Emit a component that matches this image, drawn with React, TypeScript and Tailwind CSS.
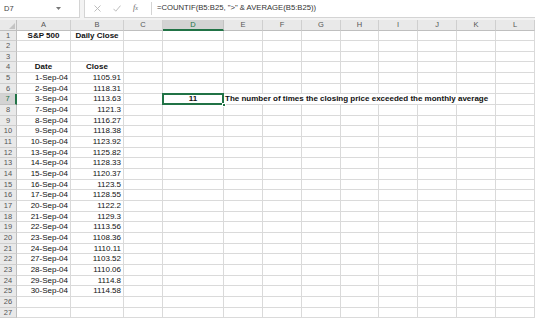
import React from 'react'

const COLS = ['A', 'B', 'C', 'D', 'E', 'F', 'G', 'H', 'I', 'J', 'K', 'L']

const DATA: [string, string][] = [
  ['1-Sep-04', '1105.91'],
  ['2-Sep-04', '1118.31'],
  ['3-Sep-04', '1113.63'],
  ['7-Sep-04', '1121.3'],
  ['8-Sep-04', '1116.27'],
  ['9-Sep-04', '1118.38'],
  ['10-Sep-04', '1123.92'],
  ['13-Sep-04', '1125.82'],
  ['14-Sep-04', '1128.33'],
  ['15-Sep-04', '1120.37'],
  ['16-Sep-04', '1123.5'],
  ['17-Sep-04', '1128.55'],
  ['20-Sep-04', '1122.2'],
  ['21-Sep-04', '1129.3'],
  ['22-Sep-04', '1113.56'],
  ['23-Sep-04', '1108.36'],
  ['24-Sep-04', '1110.11'],
  ['27-Sep-04', '1103.52'],
  ['28-Sep-04', '1110.06'],
  ['29-Sep-04', '1114.8'],
  ['30-Sep-04', '1114.58'],
]

const cell = 'border-r border-b border-[#dadada] text-[8px] leading-[10px] whitespace-nowrap overflow-visible text-[#111] px-[2px]'

function Row({ n }: { n: number }) {
  const selected = n === 7
  const hdr = (
    <div
      className={
        'border-b text-[7.5px] leading-[10px] text-center ' +
        (selected
          ? 'bg-[#d3d3d3] text-[#217346] border-[#c2c2c2] border-r-2 border-r-[#217346]'
          : 'bg-[#e9e9e9] text-[#555] border-[#cfcfcf] border-r border-r-[#bfbfbf]')
      }
    >
      {n}
    </div>
  )
  let a = ''
  let b = ''
  let aBold = false
  if (n === 1) { a = 'S&P 500'; b = 'Daily Close'; aBold = true }
  if (n === 4) { a = 'Date'; b = 'Close'; aBold = true }
  if (n >= 5 && n <= 25) { a = DATA[n - 5][0]; b = DATA[n - 5][1] }
  const align = aBold ? 'text-center font-bold' : 'text-right'

  return (
    <>
      {hdr}
      <div className={cell + ' ' + align}>{a}</div>
      <div className={cell + ' ' + align}>{b}</div>
      <div className={cell}></div>
      {selected ? (
        <div className={cell + ' relative text-center font-bold'}>
          11
          <div className="absolute -left-[1px] -top-[1px] -right-[1px] -bottom-[1px] border-2 border-[#217346]" />
          <div className="absolute -right-[3px] -bottom-[3px] w-[4px] h-[4px] bg-[#217346] border border-white" />
        </div>
      ) : (
        <div className={cell}></div>
      )}
      {selected ? (
        <>
          <div className={cell + ' col-span-7 font-bold pl-[1px]'}>
            The number of times the closing price exceeded the monthly average
          </div>
          <div className={cell}></div>
        </>
      ) : (
        COLS.slice(4).map((c) => <div key={c} className={cell}></div>)
      )}
    </>
  )
}

export default function App() {
  return (
    <div
      className="w-[535px] h-[319px] overflow-hidden bg-white"
      style={{ fontFamily: '"Liberation Sans", Arial, sans-serif' }}
    >
      {/* formula bar */}
      <div className="h-[20px] bg-[#f3f3f3] pb-[2.5px] flex">
        <div className="w-[80px] h-full bg-white border-r border-b border-[#d4d4d4] flex items-center justify-between pl-[4px] pr-[18px]">
          <span className="text-[7.5px] text-[#444]">D7</span>
          <svg width="5" height="3" viewBox="0 0 5 3"><path d="M0 0 L5 0 L2.5 3 Z" fill="#777" /></svg>
        </div>
        <div className="w-[4px]" />
        <div className="flex-1 h-full bg-white border-b border-l border-[#d4d4d4] flex items-center">
          <div className="w-[66px] flex items-center pl-[9px] gap-[12px]">
            <svg width="7" height="7" viewBox="0 0 7 7"><path d="M0.5 0.5 L6.5 6.5 M6.5 0.5 L0.5 6.5" stroke="#b5b5b5" strokeWidth="0.9" /></svg>
            <svg width="8" height="7" viewBox="0 0 8 7"><path d="M0.5 3.8 L2.8 6.2 L7.5 0.6" stroke="#b5b5b5" strokeWidth="0.9" fill="none" /></svg>
            <span className="text-[8px] italic text-[#666]" style={{ fontFamily: '"Liberation Serif", serif' }}>f<span className="text-[6px]">x</span></span>
          </div>
          <div className="w-[1px] h-[13px] bg-[#d4d4d4]" />
          <div className="pl-[5px] text-[7.7px] text-[#333] whitespace-nowrap">
            =COUNTIF(B5:B25, "&gt;" &amp; AVERAGE(B5:B25))
          </div>
        </div>
      </div>
      {/* grid */}
      <div className="grid grid-cols-[17px_54px_53px_39px_61px_39px_39px_39px_38px_39px_39px_39px_39px] grid-rows-[10.5px_repeat(27,10.667px)]">
        <div className="bg-[#e9e9e9] border-r border-b border-[#bfbfbf] relative">
          <svg className="absolute right-[1px] bottom-[1px]" width="6" height="6" viewBox="0 0 6 6"><path d="M6 0 L6 6 L0 6 Z" fill="#c4c4c4" /></svg>
        </div>
        {COLS.map((c) => (
          <div
            key={c}
            className={
              'text-[7.5px] leading-[10px] text-center ' +
              (c === 'D'
                ? 'bg-[#d3d3d3] text-[#217346] border-r border-[#c2c2c2] border-b-2 border-b-[#217346]'
                : 'bg-[#e9e9e9] text-[#555] border-r border-[#cfcfcf] border-b border-b-[#bfbfbf]')
            }
          >
            {c}
          </div>
        ))}
        {Array.from({ length: 27 }, (_, i) => (
          <Row key={i} n={i + 1} />
        ))}
      </div>
    </div>
  )
}
